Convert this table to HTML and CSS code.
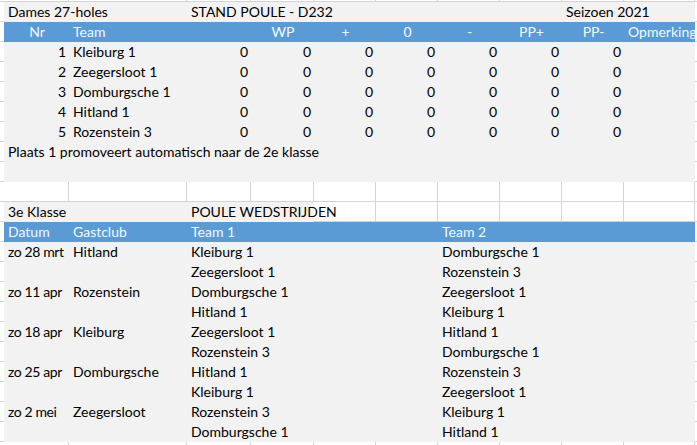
FILE: index.html
```html
<!DOCTYPE html>
<html lang="nl">
<head>
<meta charset="utf-8">
<title>Stand Poule D232</title>
<link rel="stylesheet" href="styles.css">
</head>
<body>
<div class="sheet">
  <div class="row edge-top">
    <div class="stub"></div>
    <div class="w"></div><div class="w"></div><div class="w"></div><div class="w"></div><div class="w"></div>
    <div class="w"></div><div class="w"></div><div class="w"></div><div class="w"></div><div class="w"></div>
    <div class="tail"></div>
  </div>

  <div class="row">
    <div class="stub"></div>
    <div class="g s2">Dames 27-holes</div>
    <div class="g s6">STAND POULE - D232</div>
    <div class="g s2">Seizoen 2021</div>
    <div class="tail"></div>
  </div>

  <div class="row">
    <div class="stub"></div>
    <div class="h c">Nr</div>
    <div class="h">Team</div>
    <div class="h"></div>
    <div class="h c">WP</div>
    <div class="h c">+</div>
    <div class="h c">0</div>
    <div class="h c">-</div>
    <div class="h c">PP+</div>
    <div class="h c">PP-</div>
    <div class="h c">Opmerking</div>
    <div class="tail"></div>
  </div>

  <div class="row">
    <div class="stub"></div>
    <div class="g r">1</div><div class="g">Kleiburg 1</div>
    <div class="g r">0</div><div class="g r">0</div><div class="g r">0</div><div class="g r">0</div><div class="g r">0</div><div class="g r">0</div><div class="g r">0</div>
    <div class="g"></div>
    <div class="tail"></div>
  </div>
  <div class="row">
    <div class="stub"></div>
    <div class="g r">2</div><div class="g">Zeegersloot 1</div>
    <div class="g r">0</div><div class="g r">0</div><div class="g r">0</div><div class="g r">0</div><div class="g r">0</div><div class="g r">0</div><div class="g r">0</div>
    <div class="g"></div>
    <div class="tail"></div>
  </div>
  <div class="row">
    <div class="stub"></div>
    <div class="g r">3</div><div class="g">Domburgsche 1</div>
    <div class="g r">0</div><div class="g r">0</div><div class="g r">0</div><div class="g r">0</div><div class="g r">0</div><div class="g r">0</div><div class="g r">0</div>
    <div class="g"></div>
    <div class="tail"></div>
  </div>
  <div class="row">
    <div class="stub"></div>
    <div class="g r">4</div><div class="g">Hitland 1</div>
    <div class="g r">0</div><div class="g r">0</div><div class="g r">0</div><div class="g r">0</div><div class="g r">0</div><div class="g r">0</div><div class="g r">0</div>
    <div class="g"></div>
    <div class="tail"></div>
  </div>
  <div class="row">
    <div class="stub"></div>
    <div class="g r">5</div><div class="g">Rozenstein 3</div>
    <div class="g r">0</div><div class="g r">0</div><div class="g r">0</div><div class="g r">0</div><div class="g r">0</div><div class="g r">0</div><div class="g r">0</div>
    <div class="g"></div>
    <div class="tail"></div>
  </div>

  <div class="row">
    <div class="stub"></div>
    <div class="g s10">Plaats 1 promoveert automatisch naar de 2e klasse</div>
    <div class="tail"></div>
  </div>
  <div class="row">
    <div class="stub"></div>
    <div class="g s10"></div>
    <div class="tail"></div>
  </div>

  <div class="row">
    <div class="stub"></div>
    <div class="w"></div><div class="w"></div><div class="w"></div><div class="w"></div><div class="w"></div>
    <div class="w"></div><div class="w"></div><div class="w"></div><div class="w"></div><div class="w"></div>
    <div class="tail"></div>
  </div>

  <div class="row">
    <div class="stub"></div>
    <div class="g s2">3e Klasse</div>
    <div class="g s2 over">POULE WEDSTRIJDEN</div>
    <div class="w"></div><div class="w"></div><div class="w"></div><div class="w"></div><div class="w"></div><div class="w"></div>
    <div class="tail"></div>
  </div>

  <div class="row">
    <div class="stub"></div>
    <div class="h">Datum</div>
    <div class="h">Gastclub</div>
    <div class="h s4">Team 1</div>
    <div class="h s4">Team 2</div>
    <div class="tail"></div>
  </div>

  <div class="row">
    <div class="stub"></div>
    <div class="g dt">zo 28 mrt</div><div class="g">Hitland</div>
    <div class="g s4">Kleiburg 1</div><div class="g s4">Domburgsche 1</div>
    <div class="tail"></div>
  </div>
  <div class="row">
    <div class="stub"></div>
    <div class="g"></div><div class="g"></div>
    <div class="g s4">Zeegersloot 1</div><div class="g s4">Rozenstein 3</div>
    <div class="tail"></div>
  </div>
  <div class="row">
    <div class="stub"></div>
    <div class="g dt">zo 11 apr</div><div class="g">Rozenstein</div>
    <div class="g s4">Domburgsche 1</div><div class="g s4">Zeegersloot 1</div>
    <div class="tail"></div>
  </div>
  <div class="row">
    <div class="stub"></div>
    <div class="g"></div><div class="g"></div>
    <div class="g s4">Hitland 1</div><div class="g s4">Kleiburg 1</div>
    <div class="tail"></div>
  </div>
  <div class="row">
    <div class="stub"></div>
    <div class="g dt">zo 18 apr</div><div class="g">Kleiburg</div>
    <div class="g s4">Zeegersloot 1</div><div class="g s4">Hitland 1</div>
    <div class="tail"></div>
  </div>
  <div class="row">
    <div class="stub"></div>
    <div class="g"></div><div class="g"></div>
    <div class="g s4">Rozenstein 3</div><div class="g s4">Domburgsche 1</div>
    <div class="tail"></div>
  </div>
  <div class="row">
    <div class="stub"></div>
    <div class="g dt">zo 25 apr</div><div class="g">Domburgsche</div>
    <div class="g s4">Hitland 1</div><div class="g s4">Rozenstein 3</div>
    <div class="tail"></div>
  </div>
  <div class="row">
    <div class="stub"></div>
    <div class="g"></div><div class="g"></div>
    <div class="g s4">Kleiburg 1</div><div class="g s4">Zeegersloot 1</div>
    <div class="tail"></div>
  </div>
  <div class="row">
    <div class="stub"></div>
    <div class="g dt">zo 2 mei</div><div class="g">Zeegersloot</div>
    <div class="g s4">Rozenstein 3</div><div class="g s4">Kleiburg 1</div>
    <div class="tail"></div>
  </div>
  <div class="row">
    <div class="stub"></div>
    <div class="g"></div><div class="g"></div>
    <div class="g s4">Domburgsche 1</div><div class="g s4">Hitland 1</div>
    <div class="tail"></div>
  </div>

  <div class="row">
    <div class="stub"></div>
    <div class="w"></div><div class="w"></div><div class="w"></div><div class="w"></div><div class="w"></div>
    <div class="w"></div><div class="w"></div><div class="w"></div><div class="w"></div><div class="w"></div>
    <div class="tail"></div>
  </div>
</div>
</body>
</html>
```

FILE: styles.css
```css
html, body {
  margin: 0;
  padding: 0;
  background: #ffffff;
}

.sheet {
  width: 697px;
  font-family: "Lato", "Open Sans", sans-serif;
  font-size: 14px;
  color: #000000;
}

.row {
  display: grid;
  grid-template-columns: 4px 65px 118px 64px 63px 62px 62px 62px 62px 62px 71px 1fr;
  height: 20px;
  line-height: 20px;
}

.row.edge-top {
  height: 2px;
  line-height: 2px;
}

.row > div {
  box-sizing: border-box;
  white-space: nowrap;
  overflow: visible;
  padding: 0 3px 0 4px;
}

.stub, .tail {
  border-bottom: 1px solid #d4d4d4;
  padding: 0 !important;
}

.w {
  background: #ffffff;
  border-right: 1px solid #d4d4d4;
  border-bottom: 1px solid #d4d4d4;
}

.g {
  background: #f2f2f2;
}

.h {
  background: #5b9bd5;
  color: #f4f8fc;
}

.over {
  position: relative;
  z-index: 1;
}

.dt {
  letter-spacing: -0.4px;
}

.c { text-align: center; }
.r { text-align: right; }

.s2 { grid-column: span 2; }
.s4 { grid-column: span 4; }
.s6 { grid-column: span 6; }
.s10 { grid-column: span 10; }
```
